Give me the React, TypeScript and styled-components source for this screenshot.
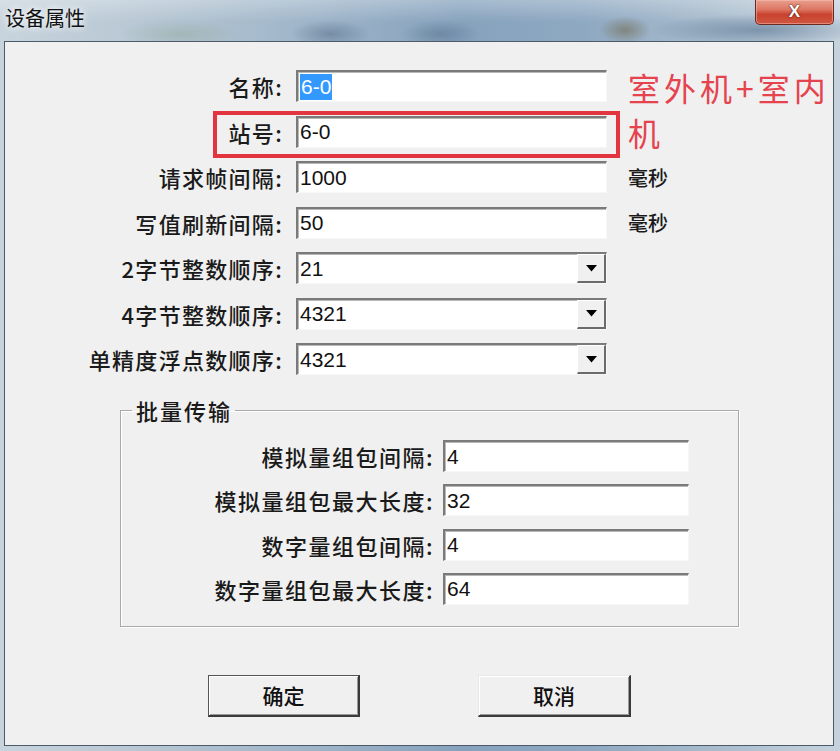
import React from 'react';
import styled, { createGlobalStyle } from 'styled-components';

const CJK = `"Noto Sans CJK SC", "Noto Sans", sans-serif`;
const LATIN = `"Liberation Sans", Arial, "Noto Sans CJK SC", sans-serif`;

const GlobalStyle = createGlobalStyle`
  html, body { margin: 0; padding: 0; }
  body { width: 840px; height: 751px; overflow: hidden; background: #b9c9d7; }
  *, *::before, *::after { box-sizing: border-box; }
`;

const Window = styled.div`
  width: 840px;
  height: 751px;
  display: flex;
  flex-direction: column;
  background:
    radial-gradient(ellipse 40px 14px at 330px 34px, rgba(70, 95, 125, 0.45), transparent),
    radial-gradient(ellipse 40px 14px at 440px 34px, rgba(70, 95, 125, 0.4), transparent),
    radial-gradient(ellipse 26px 14px at 625px 30px, rgba(110, 100, 70, 0.55), transparent),
    radial-gradient(ellipse 110px 16px at 760px 30px, rgba(60, 90, 125, 0.45), transparent),
    radial-gradient(ellipse 60px 14px at 180px 34px, rgba(120, 150, 110, 0.25), transparent),
    linear-gradient(180deg, rgba(255, 255, 255, 0.28) 0px, rgba(255, 255, 255, 0) 22px),
    linear-gradient(90deg, #c8d4dd 0%, #b6c6d3 18%, #9db4c8 38%, #86a2bd 55%, #8fa9c2 70%, #a8bccd 85%, #c6d3de 100%);
`;

const TitleBar = styled.div`
  height: 41px;
  display: flex;
  justify-content: space-between;
  align-items: flex-start;
  padding-left: 5px;
`;

const Title = styled.div`
  font-family: ${CJK};
  font-size: 20px;
  line-height: 20px;
  margin-top: 8px;
  color: #111;
  text-shadow: 0 0 6px rgba(255, 255, 255, 0.95), 0 0 10px rgba(255, 255, 255, 0.7);
`;

const CloseButton = styled.div`
  width: 79px;
  height: 25px;
  margin-right: 6px;
  border: 1px solid #6a2a22;
  border-top: none;
  border-radius: 0 0 5px 5px;
  background: linear-gradient(180deg, #e9a08e 0%, #dc7561 40%, #c8432f 60%, #d0563f 100%);
  box-shadow: inset 0 0 0 1px rgba(255, 200, 190, 0.45);
  display: flex;
  align-items: center;
  justify-content: center;
  font-family: ${LATIN};
  font-weight: bold;
  font-size: 17px;
  color: #fff;
  text-shadow: 0 0 2px #5a1a10, 0 0 1px #5a1a10;
`;

const Client = styled.div`
  flex: 1;
  margin: 0 6px 5px 4px;
  border: 1px solid #4d5a67;
  background: #f0f0f0;
  padding-top: 28px;
  display: flex;
  flex-direction: column;
`;

const Fields = styled.div`
  display: flex;
  flex-direction: column;
  gap: 13.5px;
`;

const Row = styled.div`
  position: relative;
  display: grid;
  grid-template-columns: 278px 311px auto;
  column-gap: 13px;
  align-items: center;
  height: 32px;
`;

const Label = styled.div<{ $spacing?: number }>`
  font-family: ${CJK};
  font-size: 22px;
  font-weight: 500;
  letter-spacing: ${(p) => p.$spacing ?? 1.3}px;
  line-height: 32px;
  color: #1a1a1a;
  text-align: right;
  white-space: nowrap;
`;

const TextBox = styled.div`
  position: relative;
  height: 32px;
  background: #fff;
  border-style: solid;
  border-width: 2px 1px 1px 2px;
  border-color: #7a7a7a #f7f7f7 #f7f7f7 #7a7a7a;
  box-shadow: inset 1px 1px 0 #b8b8b8;
  display: flex;
  align-items: center;
  padding-left: 2px;
  font-family: ${LATIN};
  font-size: 21px;
  color: #111;
  white-space: nowrap;
`;

const Selected = styled.span`
  background: #3399ff;
  color: #fff;
  line-height: 26px;
  padding: 0 1px;
`;

const SelectText = styled.span`
  flex: 1;
`;

const DropButton = styled.div`
  width: 29px;
  height: 100%;
  background: #f0f0f0;
  border-style: solid;
  border-width: 1px 2px 2px 1px;
  border-color: #ffffff #6b6b6b #6b6b6b #ffffff;
  display: flex;
  align-items: center;
  justify-content: center;
`;

const Suffix = styled.div`
  font-family: ${CJK};
  font-size: 20px;
  font-weight: 500;
  color: #1a1a1a;
  padding-left: 8px;
`;

const Highlight = styled.div`
  position: absolute;
  left: 208px;
  top: -5px;
  width: 407px;
  height: 47px;
  border: 4px solid #e3353f;
  pointer-events: none;
`;

const Annotation = styled.div`
  position: absolute;
  left: 623px;
  top: -5px;
  width: 215px;
  font-family: ${CJK};
  font-size: 32px;
  line-height: 45px;
  letter-spacing: 4px;
  color: #e5434e;
`;

const Group = styled.fieldset`
  margin: 24px 0 0 115px;
  width: 619px;
  min-width: 0;
  padding: 19px 0 21px 0;
  border: 1px solid #a9a9a9;
  box-shadow: inset 1px 1px 0 #fff, 1px 1px 0 #fff;
  display: flex;
  flex-direction: column;
  gap: 12.3px;
`;

const Legend = styled.legend`
  margin-left: 11px;
  padding: 0 3px 0 4px;
  font-family: ${CJK};
  font-size: 22px;
  font-weight: 500;
  letter-spacing: 2px;
  line-height: 22px;
  color: #1a1a1a;
`;

const GroupRow = styled.div`
  display: grid;
  grid-template-columns: 313px 246px;
  column-gap: 9px;
  align-items: center;
  height: 32px;
`;

const Buttons = styled.div`
  margin-top: 48px;
  padding-left: 203px;
  display: flex;
  gap: 118px;
`;

const Button = styled.div<{ $default?: boolean }>`
  width: ${(p) => (p.$default ? 152 : 153)}px;
  height: 42px;
  background: #f0f0f0;
  border-style: solid;
  border-width: 1px 2px 2px 1px;
  border-color: ${(p) => (p.$default ? '#555 #3a3a3a #3a3a3a #555' : '#e8e8e8 #3a3a3a #3a3a3a #e8e8e8')};
  box-shadow: inset 1px 1px 0 #fff, inset -1px -1px 0 #9a9a9a;
  display: flex;
  align-items: center;
  justify-content: center;
  font-family: ${CJK};
  font-size: 21px;
  font-weight: 500;
  color: #111;
`;

const Arrow = () => (
  <svg width="11" height="7" viewBox="0 0 11 7">
    <path d="M0 0 H11 L5.5 6.5 Z" fill="#000" />
  </svg>
);

const Select = ({ value }: { value: string }) => (
  <TextBox>
    <SelectText>{value}</SelectText>
    <DropButton>
      <Arrow />
    </DropButton>
  </TextBox>
);

const groupFields = [
  { label: '模拟量组包间隔:', value: '4' },
  { label: '模拟量组包最大长度:', value: '32' },
  { label: '数字量组包间隔:', value: '4' },
  { label: '数字量组包最大长度:', value: '64' },
];

export default function App() {
  return (
    <>
      <GlobalStyle />
      <Window>
        <TitleBar>
          <Title>设备属性</Title>
          <CloseButton>X</CloseButton>
        </TitleBar>
        <Client>
          <Fields>
            <Row>
              <Label>名称:</Label>
              <TextBox>
                <Selected>6-0</Selected>
              </TextBox>
              <div />
              <Annotation>室外机+室内机</Annotation>
            </Row>
            <Row>
              <Label>站号:</Label>
              <TextBox>6-0</TextBox>
              <div />
              <Highlight />
            </Row>
            <Row>
              <Label>请求帧间隔:</Label>
              <TextBox>1000</TextBox>
              <Suffix>毫秒</Suffix>
            </Row>
            <Row>
              <Label>写值刷新间隔:</Label>
              <TextBox>50</TextBox>
              <Suffix>毫秒</Suffix>
            </Row>
            <Row>
              <Label>2字节整数顺序:</Label>
              <Select value="21" />
              <div />
            </Row>
            <Row>
              <Label>4字节整数顺序:</Label>
              <Select value="4321" />
              <div />
            </Row>
            <Row>
              <Label>单精度浮点数顺序:</Label>
              <Select value="4321" />
              <div />
            </Row>
          </Fields>
          <Group>
            <Legend>批量传输</Legend>
            {groupFields.map((f) => (
              <GroupRow key={f.label}>
                <Label $spacing={1.5}>{f.label}</Label>
                <TextBox>{f.value}</TextBox>
              </GroupRow>
            ))}
          </Group>
          <Buttons>
            <Button $default>确定</Button>
            <Button>取消</Button>
          </Buttons>
        </Client>
      </Window>
    </>
  );
}
